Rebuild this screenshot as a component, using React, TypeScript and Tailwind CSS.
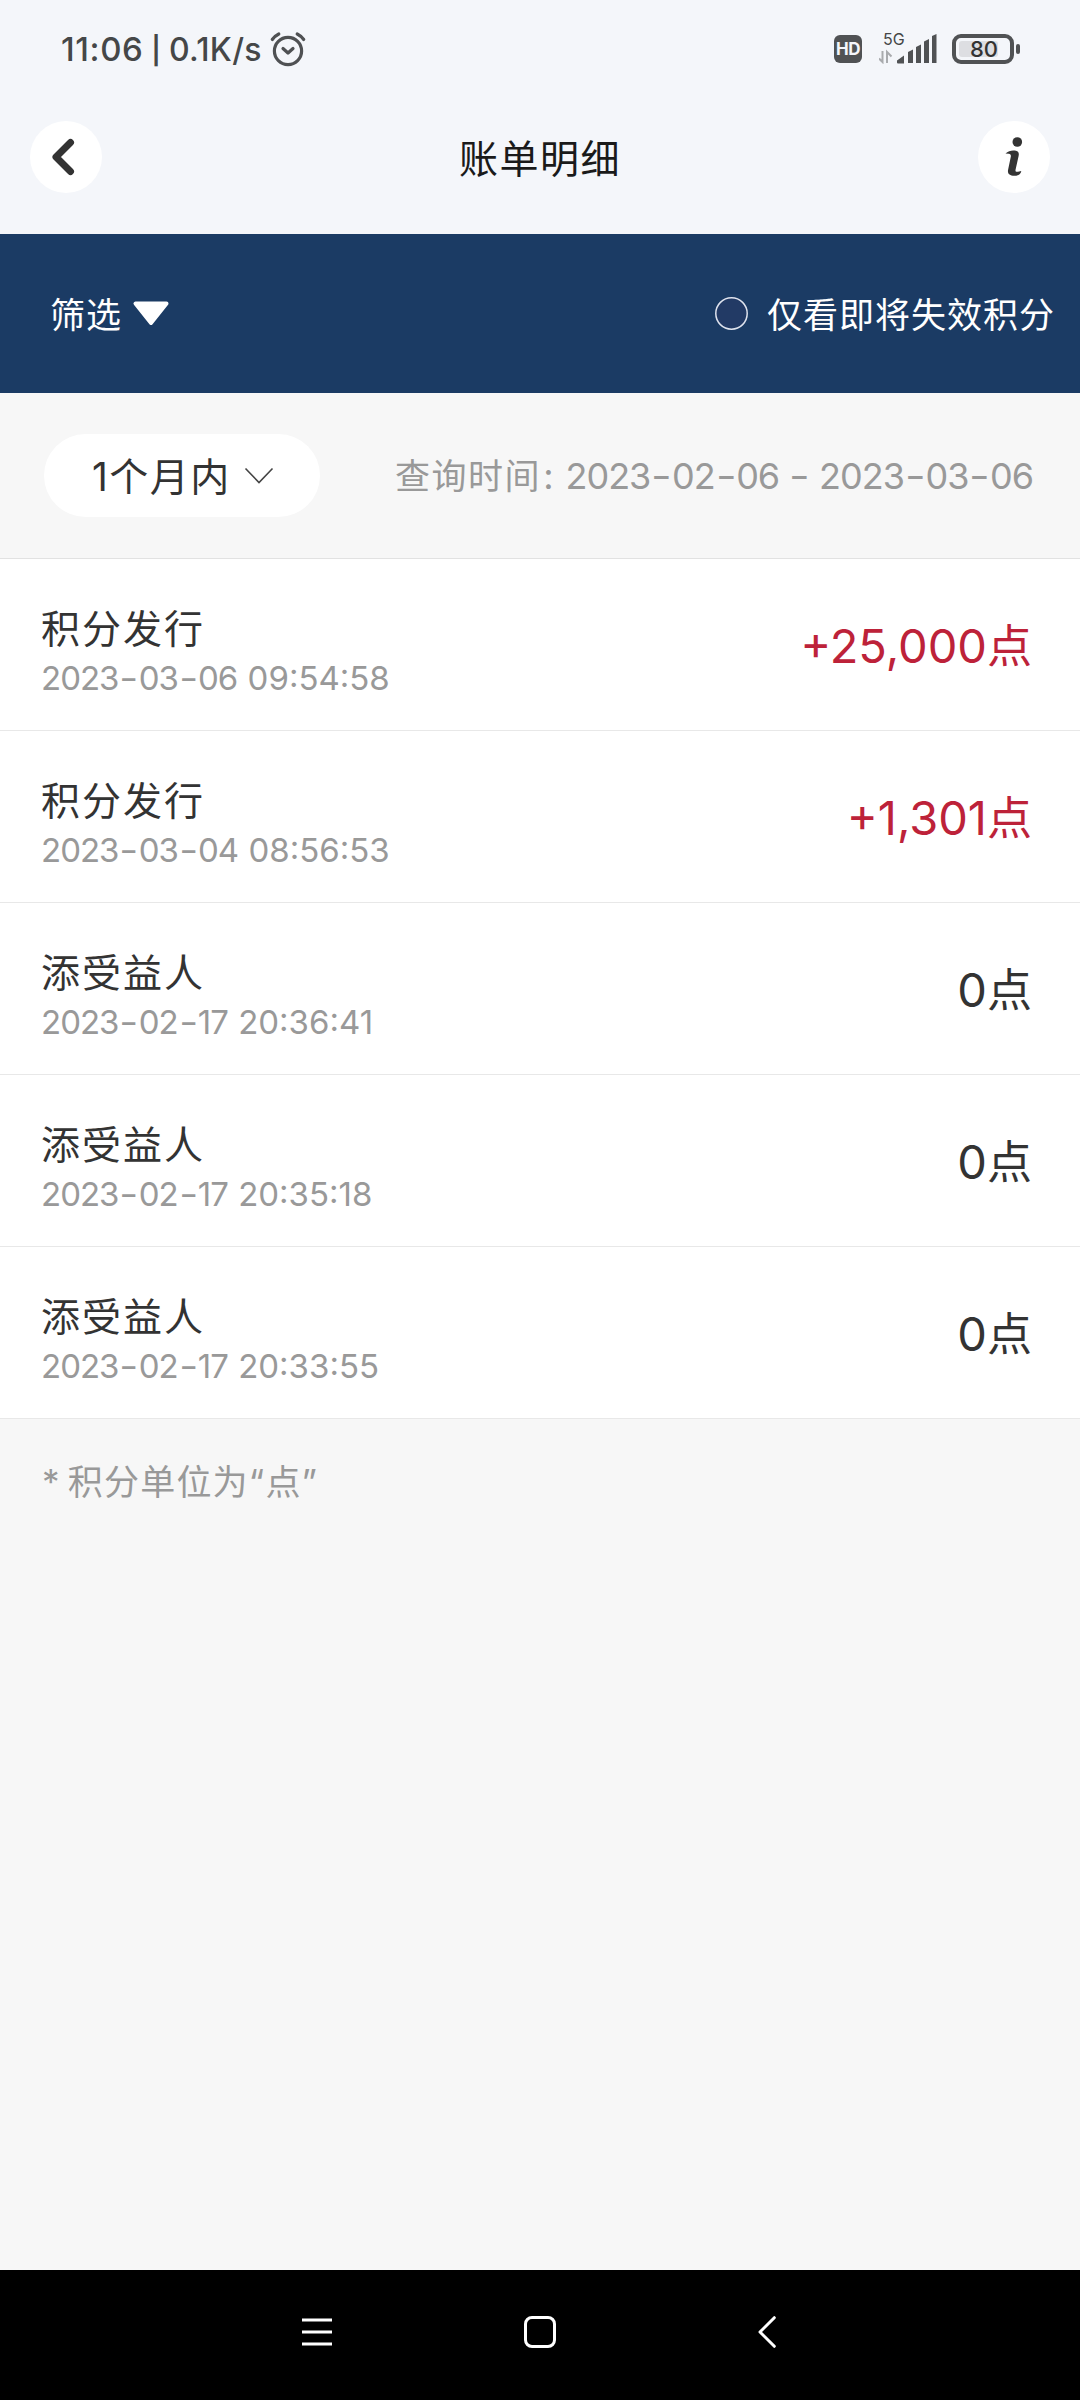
import React, { useState } from 'react';

interface BillRecord {
  id: number;
  title: string;
  date: string;
  time: string;
  amount: string;
  income: boolean;
}

const RECORDS: BillRecord[] = [
  { id: 1, title: '积分发行', date: '2023-03-06', time: '09:54:58', amount: '+25,000', income: true },
  { id: 2, title: '积分发行', date: '2023-03-04', time: '08:56:53', amount: '+1,301', income: true },
  { id: 3, title: '添受益人', date: '2023-02-17', time: '20:36:41', amount: '0', income: false },
  { id: 4, title: '添受益人', date: '2023-02-17', time: '20:35:18', amount: '0', income: false },
  { id: 5, title: '添受益人', date: '2023-02-17', time: '20:33:55', amount: '0', income: false },
];

// Dashes sit a bit wider than the font's own
const DateText: React.FC<{ value: string }> = ({ value }) => (
  <>
    {value.split('-').map((part, i) => (
      <React.Fragment key={i}>
        {i > 0 && <span className="mx-[3px] inline-block scale-x-125">-</span>}
        {part}
      </React.Fragment>
    ))}
  </>
);

const StatusBar: React.FC = () => (
  <div className="flex h-[98px] items-center justify-between pl-[61px] pr-[60px] pt-[2px] text-[#454748]">
    <div className="flex items-center whitespace-nowrap">
      <span className="w-[84px] text-[33px] font-medium tracking-[0.6px]">11:06</span>
      <span className="ml-[5px] w-[12px] text-center text-[27px] font-semibold leading-none">|</span>
      <span className="ml-[7px] w-[98px] text-[32px] font-medium tracking-[0.3px]">0.1K/s</span>
      <svg className="-mt-[2px] ml-[3px]" width="36" height="36" viewBox="0 0 36 36" fill="none" stroke="#4f5153" strokeWidth="3.2" strokeLinecap="round" strokeLinejoin="round">
        <circle cx="18" cy="20" r="13.6" />
        <path d="M2.3 8.5C4 6 6.400 4.200 8.800 3M33.700 8.500C32 6 29.600 4.200 27.200 3M13 17.500l5 4.500 5-4.500" />
      </svg>
    </div>
    <div className="flex items-center pb-[2px]">
      <span className="flex h-[28px] w-[28px] items-center justify-center rounded-[6px] bg-[#505254] pt-[1px] text-[17px] font-bold leading-none tracking-[-0.5px] text-[#f4f6fb]">HD</span>
      <div className="ml-[17px] flex h-[34px] w-[58px] flex-col">
        <span className="pl-[4px] text-[16px] leading-[14px]">5G</span>
        <svg className="-mt-[12px]" width="58" height="30" viewBox="0 0 58 30">
          <path d="M3.500 17v11L0 24.500M8 29V18l4.500 4.500" fill="none" stroke="#a9abae" strokeWidth="2" />
          <path d="M18 28.500v-2l7-5v8h-6a1 1 0 0 1-1-1zM29 18l5-2.500v13.500h-5zM37 13l5-2.500v18.500h-5zM45 7.500l5-2.500v24h-5zM53 2l4.500-2v29h-4.500z" fill="#505254" />
        </svg>
      </div>
      <div className="ml-[15px] flex h-[30px] w-[62px] items-center rounded-[9px] border-[4px] border-[#505254] p-[3px]">
        <span className="flex h-[16px] w-[39px] items-center justify-end rounded-[3px] bg-[#dddee2] text-[22px] font-medium text-[#333]">80</span>
      </div>
      <span className="ml-[2px] h-[10px] w-[4px] rounded-[2px] bg-[#505254]" />
    </div>
  </div>
);

const TitleBar: React.FC = () => (
  <header className="flex h-[136px] items-center justify-between px-[30px] pb-[18px]">
    <button className="flex h-[72px] w-[72px] items-center justify-center rounded-full bg-white">
      <svg width="72" height="72" viewBox="0 0 72 72" fill="none" stroke="#333" strokeWidth="7" strokeLinecap="round" strokeLinejoin="round">
        <path d="M40.500 21.500L26 36l14.500 14.500" />
      </svg>
    </button>
    <h1 className="pt-[2px] text-[39px] leading-none tracking-[1.5px] text-[#1a1a1a]">账单明细</h1>
    <button className="flex h-[72px] w-[72px] items-center justify-center rounded-full bg-white">
      <svg width="72" height="72" viewBox="0 0 72 72" fill="#333">
        <circle cx="39.300" cy="21" r="4.800" />
        <path d="M27.500 32.500c3-3 7.500-3.500 10.500-2.700 2.600.7 3.200 2.500 2.600 5.200l-3 13.500c-.5 2 .6 2.700 2.400 2.200l3.300-.7c-.3 3.400-3.300 4.700-7 4.700-4.800 0-7-2-6.200-6l2.700-13c.3-1.800-.3-2.700-2-2.900z" />
      </svg>
    </button>
  </header>
);

const NavigationBar: React.FC = () => (
  <nav className="flex h-[130px] items-center bg-black pb-[6px]">
    <svg className="ml-[302px]" width="30" height="32" viewBox="0 0 30 32" stroke="#fff" strokeWidth="3">
      <path d="M0 4h30M0 16h30M0 28h30" />
    </svg>
    <span className="ml-[192px] h-[32px] w-[32px] rounded-[8px] border-[3px] border-white" />
    <svg className="ml-[202px]" width="18" height="32" viewBox="0 0 18 32" fill="none" stroke="#fff" strokeWidth="3" strokeLinecap="round" strokeLinejoin="round">
      <path d="M16.300 1.700L2 16l14.300 14.300" />
    </svg>
  </nav>
);

const App: React.FC = () => {
  const [onlyExpiring, setOnlyExpiring] = useState(false);

  return (
    <div className="flex h-[2400px] w-[1080px] flex-col overflow-hidden bg-[#f7f7f7] font-['Inter','Noto_Sans_CJK_SC',sans-serif]">
      <div className="h-[234px] bg-[#f4f6fa]">
        <StatusBar />
        <TitleBar />
      </div>

      <div className="flex h-[159px] items-center justify-between bg-[#1b3b64] pl-[50px] pr-[25px] text-[35px] leading-none tracking-[1px] text-white">
        <button className="flex items-center">
          <span className="pt-[3px]">筛选</span>
          <svg className="ml-[10px]" width="38" height="26" viewBox="0 0 38 26" fill="#fff" stroke="#fff" strokeWidth="4" strokeLinejoin="round">
            <path d="M3.500 2.500h31L19 22z" />
          </svg>
        </button>
        <button className="flex items-center" onClick={() => setOnlyExpiring(!onlyExpiring)}>
          <svg className="mr-[19px]" width="33" height="33" viewBox="0 0 33 33" stroke="#dfe3ee" strokeWidth="1.500" fill={onlyExpiring ? '#fff' : '#223a65'}>
            <circle cx="16.500" cy="16.500" r="15.700" />
          </svg>
          <span className="pt-[3px]">仅看即将失效积分</span>
        </button>
      </div>

      <div className="flex h-[166px] items-center justify-between border-b border-[#e2e2e2] pl-[44px] pr-[47px]">
        <button className="flex h-[83px] w-[276px] items-center rounded-full bg-white pl-[48px] text-[39px] leading-none tracking-[1.5px] text-[#333]">
          <span className="pt-[2px]">1个月内</span>
          <svg className="ml-[13px]" width="30" height="18" viewBox="0 0 30 18" fill="none" stroke="#444" strokeWidth="1.600">
            <path d="M1.500 1.500L15 15.500 28.500 1.500" />
          </svg>
        </button>
        <div className="flex items-center whitespace-nowrap text-[36px] leading-none text-[#999]">
          <span className="mr-[2px] pt-[2px] text-[35px] tracking-[1.500px]">查询时间</span>
          <span className="mr-[12px]">:</span>
          <span className="tracking-[-1px]"><DateText value="2023-02-06 - 2023-03-06" /></span>
        </div>
      </div>

      <ul>
        {RECORDS.map(record => (
          <li key={record.id} className="flex h-[172px] items-center justify-between border-b border-[#e8e8e8] bg-white pl-[41px] pr-[48px]">
            <div className="flex flex-col pt-[17px]">
              <span className="text-[39px] leading-[48px] tracking-[2px] text-[#333]">{record.title}</span>
              <span className="mt-[1px] text-[33px] leading-[48px] tracking-[-1px] text-[#999] [word-spacing:2px]">
                <DateText value={record.date} />{' '}
                <span className="tracking-normal">{record.time}</span>
              </span>
            </div>
            <span className={`pt-[2px] text-[47px] leading-none ${record.income ? 'text-[#bd2239]' : 'text-[#333]'}`}>
              {record.amount}<span className="text-[45px]">点</span>
            </span>
          </li>
        ))}
      </ul>

      <p className="flex-1 pl-[42px] pt-[45px] text-[35px] leading-[36px] tracking-[1.200px] text-[#999] [word-spacing:-4px]">* 积分单位为“点”</p>

      <NavigationBar />
    </div>
  );
};

export default App;
